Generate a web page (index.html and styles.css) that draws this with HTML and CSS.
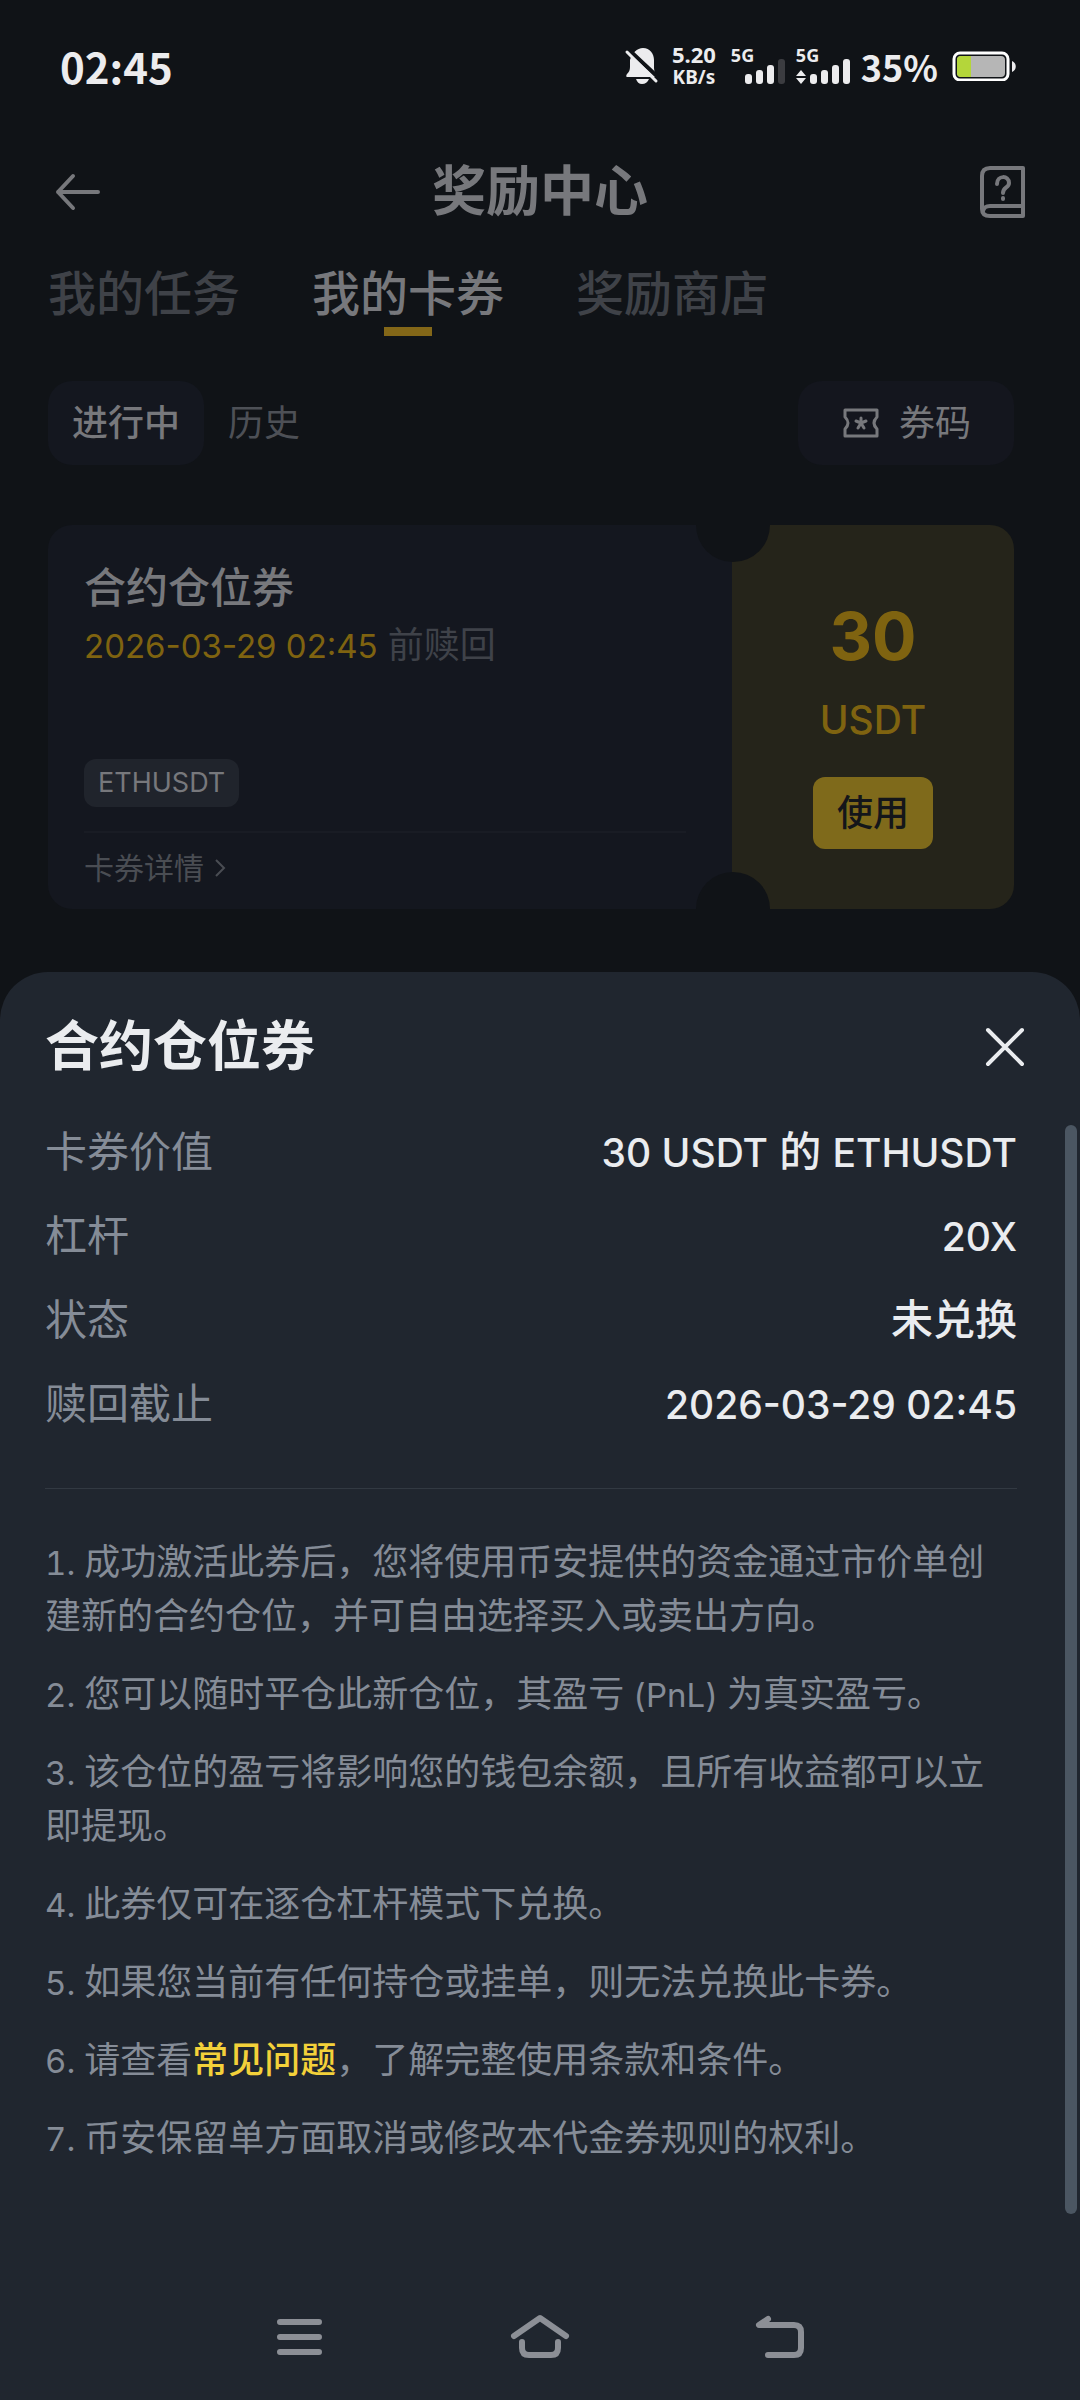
FILE: index.html
```html
<!DOCTYPE html>
<html lang="zh-CN">
<head>
  <meta charset="utf-8">
  <meta name="viewport" content="width=device-width, initial-scale=1">
  <title>奖励中心</title>
  <link rel="stylesheet" href="styles.css">
</head>
<body>
  <div class="screen">
    <div class="status">
      <span class="status-time">02:45</span>
      <div class="status-icons">
        <svg class="bell" width="36" height="40" viewBox="0 0 36 40" aria-hidden="true">
          <path fill="#ececee" d="M6 14 C8 7 13 2 19 2 C26 2 30 8 30 14 V22 C30 26 32 28 33 31 H3 C2 31 2 29 3 28 C5 26 6 24 6 21 Z"/>
          <path fill="#ececee" d="M12 33 H25 C24 36 21 38 18 38 C15 38 13 36 12 33 Z"/>
          <path stroke="#101317" stroke-width="4" d="M5 4 L36 33"/>
          <path stroke="#ececee" stroke-width="3" stroke-linecap="round" d="M3 6 L32 35"/>
        </svg>
        <div class="net-speed"><span class="speed-value">5.20</span><span class="speed-unit">KB/s</span></div>
        <div class="signal">
          <span class="signal-type">5G</span>
          <svg width="56" height="25" viewBox="0 0 56 25" aria-hidden="true">
            <g fill="#ececee"><rect x="14" y="15" width="7" height="10" rx="3"/><rect x="25" y="11" width="7" height="14" rx="3"/><rect x="36" y="6" width="7" height="19" rx="3"/></g>
            <rect x="47" y="0" width="7" height="25" rx="3" fill="#3b3c40"/>
          </svg>
        </div>
        <div class="signal">
          <span class="signal-type">5G</span>
          <svg width="56" height="25" viewBox="0 0 56 25" aria-hidden="true">
            <g fill="#ececee"><path d="M5 11 L10 17 H0 Z M5 25 L0 19 H10 Z"/><rect x="14" y="15" width="7" height="10" rx="3"/><rect x="25" y="11" width="7" height="14" rx="3"/><rect x="36" y="6" width="7" height="19" rx="3"/><rect x="47" y="0" width="7" height="25" rx="3"/></g>
          </svg>
        </div>
        <span class="battery-level">35%</span>
        <svg class="battery" width="66" height="30" viewBox="0 0 66 30" aria-hidden="true">
          <rect x="2" y="2" width="54" height="27" rx="6" fill="none" stroke="#fff" stroke-width="3"/>
          <rect x="5" y="5" width="48" height="21" rx="4" fill="#b6b6b6"/>
          <path d="M9 5 H19 V26 H9 A4 4 0 0 1 5 22 V9 A4 4 0 0 1 9 5 Z" fill="#b4d63a"/>
          <path d="M60 10 C65 12 65 19 60 21 Z" fill="#ececee"/>
        </svg>
      </div>
    </div>

    <header class="topbar">
      <button class="icon-button" type="button" aria-label="返回">
        <svg width="60" height="60" viewBox="0 0 60 60" fill="none" stroke="#77787c" stroke-width="4" stroke-linecap="round" stroke-linejoin="round"><path d="M50 30 H10 M25 14 L10 30 L25 46"/></svg>
      </button>
      <h1 class="title">奖励中心</h1>
      <button class="icon-button" type="button" aria-label="帮助">
        <svg width="60" height="60" viewBox="0 0 60 60" fill="none" stroke="#77787c" stroke-width="4" stroke-linecap="round" stroke-linejoin="round"><path d="M51 6 H18 Q10 6 10 14 V47 Q10 54 18 54 H51 Z"/><path d="M51 44 H18 Q12 44 11 49"/><path d="M25 22 C25 13 37 13 37 21 C37 26 31 25 31 31"/><path d="M31 36 V37"/></svg>
      </button>
    </header>

    <nav class="tabs">
      <a class="tab" href="#tasks">我的任务</a>
      <a class="tab tab-active" href="#vouchers">我的卡券</a>
      <a class="tab" href="#shop">奖励商店</a>
    </nav>

    <main class="content">
      <div class="filters">
        <button class="filter filter-active" type="button">进行中</button>
        <button class="filter" type="button">历史</button>
        <button class="code-button" type="button">
          <svg width="40" height="36" viewBox="0 0 40 36" fill="none" stroke="#77787c" stroke-width="3" stroke-linejoin="round" aria-hidden="true"><path d="M4 5 H36 V12 Q30 18 36 24 V31 H4 V24 Q10 18 4 12 Z"/><path stroke-linecap="round" d="M20 13 V18 M15 16 L20 18 M25 16 L20 18 M17 23 L20 18 M23 23 L20 18"/></svg>
          <span>券码</span>
        </button>
      </div>

      <article class="voucher">
        <div class="voucher-info">
          <h2 class="voucher-title">合约仓位券</h2>
          <p class="voucher-expiry"><time class="voucher-date">2026-03-29 02:45</time> 前赎回</p>
          <span class="voucher-tag">ETHUSDT</span>
          <a class="voucher-detail" href="#detail">卡券详情
            <svg width="12" height="20" viewBox="0 0 12 20" fill="none" stroke="#4a4d53" stroke-width="2" aria-hidden="true"><path d="M2 2 L10 10 L2 18"/></svg>
          </a>
        </div>
        <div class="voucher-value">
          <span class="amount">30</span>
          <span class="currency">USDT</span>
          <button class="use-button" type="button">使用</button>
        </div>
      </article>
    </main>

    <section class="sheet" id="detail" role="dialog" aria-labelledby="sheet-title">
      <header class="sheet-header">
        <h2 class="sheet-title" id="sheet-title">合约仓位券</h2>
        <button class="icon-button" type="button" aria-label="关闭">
          <svg width="60" height="60" viewBox="0 0 60 60" fill="none" stroke="#eaecef" stroke-width="4" stroke-linecap="round"><path d="M13 13 L47 47 M47 13 L13 47"/></svg>
        </button>
      </header>

      <div class="sheet-body">
        <dl class="facts">
          <div class="fact"><dt>卡券价值</dt><dd><span class="latin">30 USDT</span> 的 <span class="latin">ETHUSDT</span></dd></div>
          <div class="fact"><dt>杠杆</dt><dd><span class="latin">20X</span></dd></div>
          <div class="fact"><dt>状态</dt><dd>未兑换</dd></div>
          <div class="fact"><dt>赎回截止</dt><dd><time class="latin">2026-03-29 02:45</time></dd></div>
        </dl>
        <ol class="terms">
          <li><span class="small-latin">1. </span>成功激活此券后，您将使用币安提供的资金通过市价单创建新的合约仓位，并可自由选择买入或卖出方向。</li>
          <li><span class="small-latin">2. </span>您可以随时平仓此新仓位，其盈亏<span class="small-latin"> (PnL) </span>为真实盈亏。</li>
          <li><span class="small-latin">3. </span>该仓位的盈亏将影响您的钱包余额，且所有收益都可以立即提现。</li>
          <li><span class="small-latin">4. </span>此券仅可在逐仓杠杆模式下兑换。</li>
          <li><span class="small-latin">5. </span>如果您当前有任何持仓或挂单，则无法兑换此卡券。</li>
          <li><span class="small-latin">6. </span>请查看<a class="faq-link" href="#faq">常见问题</a>，了解完整使用条款和条件。</li>
          <li><span class="small-latin">7. </span>币安保留单方面取消或修改本代金券规则的权利。</li>
        </ol>
        <div class="scrollbar"></div>
      </div>

      <nav class="system-nav">
        <button class="icon-button" type="button" aria-label="最近任务">
          <svg width="60" height="60" viewBox="0 0 60 60" stroke="#8c8f96" stroke-width="6" stroke-linecap="round"><path d="M10 15 H49 M10 30 H49 M10 45 H49"/></svg>
        </button>
        <button class="icon-button" type="button" aria-label="主屏幕">
          <svg width="60" height="60" viewBox="0 0 60 60" fill="none" stroke="#8c8f96" stroke-width="6" stroke-linecap="round" stroke-linejoin="round"><path d="M4 29 L30 11 L56 29"/><path d="M12 35 V41 Q12 48 19 48 H41 Q48 48 48 41 V35"/></svg>
        </button>
        <button class="icon-button" type="button" aria-label="后退">
          <svg width="60" height="60" viewBox="0 0 60 60" fill="none" stroke="#8c8f96" stroke-width="6" stroke-linecap="round" stroke-linejoin="round"><path d="M18 12 L9 18 H44 Q51 18 51 25 V41 Q51 48 44 48 H18"/></svg>
        </button>
      </nav>
    </section>
  </div>
</body>
</html>
```
FILE: styles.css
```css
* {
  box-sizing: border-box;
}

body,
h1,
h2,
p,
dl,
dd,
ol {
  margin: 0;
  padding: 0;
}

body {
  background: #101317;
  color: #77787c;
  font-family: Inter, "Noto Sans CJK SC", sans-serif;
  font-size: 36px;
}

button {
  border: 0;
  padding: 0;
  background: none;
  color: inherit;
  font: inherit;
}

a {
  color: inherit;
  text-decoration: none;
}

svg {
  display: block;
  flex: none;
}

.screen {
  display: flex;
  flex-direction: column;
  min-height: 100vh;
}

/* System status bar */
.status {
  display: flex;
  align-items: center;
  justify-content: space-between;
  height: 132px;
  padding: 0 62px 0 60px;
  color: #ececee;
  font-family: "Noto Sans CJK SC", sans-serif;
  font-weight: 700;
}

.status-time {
  font-size: 42px;
  line-height: 60px;
}

.status-icons {
  display: flex;
  align-items: center;
}

.net-speed {
  display: flex;
  flex-direction: column;
  align-items: center;
  margin: 0 15px 0 12px;
  font-family: "Noto Sans", sans-serif;
  line-height: 23px;
}

.speed-value {
  font-size: 22px;
}

.speed-unit {
  font-size: 19px;
}

.signal {
  display: grid;
  margin-right: 9px;
  height: 36px;
}

.signal-type,
.signal svg {
  grid-area: 1 / 1;
}

.signal-type {
  font-family: "Noto Sans", sans-serif;
  font-size: 18px;
  line-height: 14px;
}

.signal svg {
  align-self: end;
}

.battery-level {
  font-size: 36px;
  line-height: 60px;
}

.battery {
  margin-left: 14px;
}

/* Page header */
.topbar {
  display: flex;
  align-items: center;
  justify-content: space-between;
  height: 120px;
  padding: 0 48px;
}

.icon-button {
  width: 60px;
  height: 60px;
}

.title,
.sheet-title {
  font-size: 54px;
  font-weight: 700;
  line-height: 72px;
}

.tabs {
  display: flex;
  gap: 72px;
  padding: 0 48px;
  color: #3f4248;
  font-size: 48px;
  font-weight: 500;
  line-height: 72px;
}

.tab {
  position: relative;
  padding: 6px 0;
}

.tab-active {
  color: #77787c;
}

.tab-active::after {
  content: "";
  position: absolute;
  bottom: 0;
  left: 50%;
  width: 48px;
  height: 9px;
  margin-left: -24px;
  background: #836718;
}

/* Voucher list */
.content {
  padding: 45px 66px 63px 48px;
}

.filters {
  display: flex;
  height: 84px;
  line-height: 60px;
}

.filter {
  padding: 0 24px;
  border-radius: 24px;
  color: #4d5056;
}

.filter-active {
  background: #14171f;
  color: #77787c;
  font-weight: 500;
}

.code-button {
  display: flex;
  align-items: center;
  gap: 18px;
  margin-left: auto;
  padding: 0 43px;
  border-radius: 24px;
  background: #14161e;
}

.voucher {
  position: relative;
  display: flex;
  margin-top: 60px;
  border-radius: 24px;
  overflow: hidden;
}

/* Round notches where the stub joins the ticket */
.voucher::before,
.voucher::after {
  content: "";
  position: absolute;
  right: 244px;
  width: 74px;
  height: 74px;
  border-radius: 50%;
  background: #101317;
}

.voucher::before {
  top: -37px;
}

.voucher::after {
  bottom: -37px;
}

.voucher-info {
  display: flex;
  flex: 1;
  flex-direction: column;
  align-items: flex-start;
  padding: 36px 46px 12px 36px;
  background: #14171f;
}

.voucher-title {
  font-size: 42px;
  font-weight: 500;
  line-height: 54px;
}

.voucher-expiry {
  color: #3f4249;
  line-height: 60px;
}

.voucher-date {
  color: #7f6310;
  font-size: 33px;
  line-height: 1;
}

.voucher-tag {
  margin-top: 84px;
  padding: 0 14px;
  border-radius: 12px;
  background: #20242c;
  font-size: 27px;
  line-height: 48px;
}

.voucher-detail {
  display: flex;
  align-items: center;
  align-self: stretch;
  gap: 10px;
  margin-top: 24px;
  padding-top: 6px;
  border-top: 2px solid #191c24;
  color: #4a4d53;
  font-size: 30px;
  line-height: 58px;
}

.voucher-value {
  display: flex;
  flex-direction: column;
  align-items: center;
  width: 282px;
  padding-top: 72px;
  background: #25241a;
  color: #7f6310;
}

.amount {
  font-size: 66px;
  font-weight: 700;
  line-height: 78px;
}

.currency {
  font-size: 39px;
  font-weight: 500;
  line-height: 90px;
}

.use-button {
  width: 120px;
  height: 72px;
  margin-top: 12px;
  padding-bottom: 6px;
  border-radius: 12px;
  background: #7f6a1b;
  color: #14161a;
  font-weight: 500;
}

/* Detail sheet */
.sheet {
  display: flex;
  flex: 1;
  flex-direction: column;
  border-radius: 48px 48px 0 0;
  background: #20262f;
  color: #eaecef;
}

.sheet-header {
  display: flex;
  align-items: center;
  justify-content: space-between;
  height: 150px;
  padding: 0 45px;
}

.sheet-body {
  position: relative;
  flex: 1;
  padding: 0 63px 60px 45px;
}

.facts {
  display: flex;
  flex-direction: column;
  gap: 24px;
  padding-bottom: 54px;
  border-bottom: 1px solid #323942;
  font-size: 42px;
  line-height: 60px;
}

.fact {
  display: flex;
  justify-content: space-between;
}

.fact dt {
  color: #858c97;
}

.fact dd {
  font-weight: 500;
}

.latin {
  font-size: 39px;
  line-height: 1;
}

.small-latin {
  font-size: 33px;
  font-variant-numeric: tabular-nums;
  line-height: 1;
  white-space: pre-wrap;
}

.terms {
  display: flex;
  flex-direction: column;
  gap: 24px;
  margin-top: 46px;
  color: #858c97;
  line-height: 54px;
  list-style: none;
}

.faq-link {
  color: #f3d13a;
  font-weight: 500;
}

.scrollbar {
  position: absolute;
  top: 3px;
  right: 3px;
  bottom: 60px;
  width: 12px;
  border-radius: 6px;
  background: #4b5662;
}

.system-nav {
  display: flex;
  justify-content: center;
  gap: 180px;
  padding: 33px 0;
}
```
